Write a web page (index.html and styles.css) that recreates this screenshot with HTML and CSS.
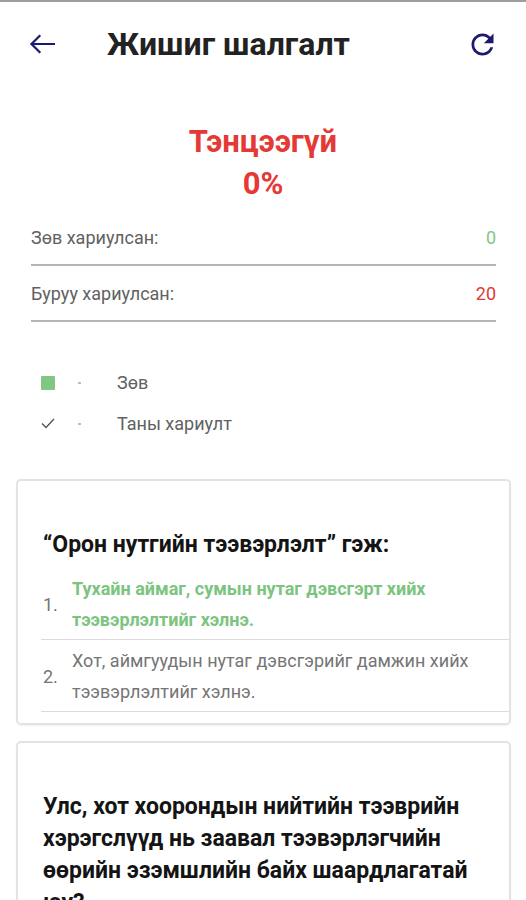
FILE: index.html
```html
<!DOCTYPE html>
<html lang="mn">
<head>
<meta charset="utf-8">
<title>Жишиг шалгалт</title>
<link rel="stylesheet" href="styles.css">
</head>
<body>
<div class="statusbar"></div>
<header class="appbar">
  <svg class="back" width="26" height="20" viewBox="0 0 26 20" aria-hidden="true">
    <path d="M25 10H2.5M10.5 2L2.5 10l8 8" fill="none" stroke="currentColor" stroke-width="2.2" stroke-linecap="square"/>
  </svg>
  <h1 class="title">Жишиг шалгалт</h1>
  <svg class="refresh" width="33" height="33" viewBox="0 0 24 24" aria-hidden="true">
    <path fill="currentColor" d="M17.65 6.35C16.2 4.9 14.21 4 12 4c-4.42 0-7.99 3.58-7.99 8s3.57 8 7.99 8c3.73 0 6.84-2.55 7.73-6h-2.08c-.82 2.33-3.04 4-5.65 4-3.31 0-6-2.69-6-6s2.69-6 6-6c1.66 0 3.14.69 4.22 1.78L13 11h7V4l-2.35 2.35z"/>
  </svg>
</header>

<section class="result">
  <div class="verdict">Тэнцээгүй</div>
  <div class="percent">0%</div>
</section>

<section class="stats">
  <div class="stat">
    <span class="stat-label">Зөв хариулсан:</span>
    <span class="stat-value good">0</span>
  </div>
  <div class="stat">
    <span class="stat-label">Буруу хариулсан:</span>
    <span class="stat-value bad">20</span>
  </div>
</section>

<section class="legend">
  <div class="legend-row">
    <span class="legend-icon"><span class="swatch"></span></span>
    <span class="legend-dot"></span>
    <span class="legend-text">Зөв</span>
  </div>
  <div class="legend-row">
    <span class="legend-icon">
      <svg width="14" height="11" viewBox="0 0 14 11" aria-hidden="true"><path d="M1 5.5l4 4L13 1" fill="none" stroke="#555" stroke-width="1.4"/></svg>
    </span>
    <span class="legend-dot"></span>
    <span class="legend-text">Таны хариулт</span>
  </div>
</section>

<section class="cards">
  <article class="card">
    <h2 class="question">“Орон нутгийн тээвэрлэлт” гэж:</h2>
    <ol class="options">
      <li class="option correct">
        <span class="num">1.</span>
        <span class="opt-text">Тухайн аймаг, сумын нутаг дэвсгэрт хийх тээвэрлэлтийг хэлнэ.</span>
      </li>
      <li class="option">
        <span class="num">2.</span>
        <span class="opt-text">Хот, аймгуудын нутаг дэвсгэрийг дамжин хийх тээвэрлэлтийг хэлнэ.</span>
      </li>
    </ol>
  </article>
  <article class="card">
    <h2 class="question">Улс, хот хоорондын нийтийн тээврийн хэрэгслүүд нь заавал тээвэрлэгчийн өөрийн эзэмшлийн байх шаардлагатай юу?</h2>
  </article>
</section>
</body>
</html>
```

FILE: styles.css
```css
* { box-sizing: border-box; }

html, body {
  margin: 0;
  padding: 0;
  background: #fff;
}

body {
  font-family: Roboto, "Noto Sans", "Liberation Sans", sans-serif;
  color: #212121;
}

.statusbar {
  height: 2px;
  background: #9e9e9e;
}

.appbar {
  height: 84px;
  display: flex;
  align-items: center;
  padding: 0 27px 0 29px;
  color: #1c1a6e;
}

.back { flex: none; }

.title {
  flex: 1;
  margin: 0 0 0 52px;
  font-size: 32px;
  font-weight: 700;
  color: #222;
  line-height: 40px;
}

.refresh { flex: none; }

.result {
  margin-top: 35px;
  text-align: center;
  color: #e53935;
  font-weight: 700;
  font-size: 31px;
  line-height: 42px;
}

.stats {
  margin-top: 5px;
  padding: 0 30px 0 31px;
}

.stat {
  display: flex;
  justify-content: space-between;
  align-items: center;
  padding: 16px 0 14px;
  line-height: 24px;
  font-size: 18px;
  border-bottom: 2px solid #b4b4b4;
}

.stat-label { color: #616161; }
.good { color: #81c784; }
.bad { color: #e53935; }

.legend {
  margin-top: 40px;
  padding-left: 41px;
}

.legend-row {
  display: flex;
  align-items: center;
  height: 41px;
  font-size: 18px;
  color: #616161;
}

.legend-icon {
  width: 14px;
  display: flex;
  align-items: center;
  justify-content: center;
}

.swatch {
  width: 14px;
  height: 14px;
  background: #81c784;
  border-radius: 1px;
}

.legend-dot {
  width: 3px;
  height: 2px;
  background: #bdbdbd;
  margin-left: 23px;
}

.legend-text { margin-left: 36px; }

.cards {
  margin-top: 35px;
  padding: 0 15px 0 16px;
  display: flex;
  flex-direction: column;
  gap: 16px;
}

.card {
  border: 2px solid #e3e3e3;
  border-radius: 5px;
  box-shadow: 0 1px 2px rgba(0,0,0,0.06);
  padding: 48px 0 11px;
}

.question {
  margin: 0;
  padding: 0 25px;
  font-size: 23px;
  font-weight: 700;
  line-height: 32px;
  color: #141414;
}

.options {
  list-style: none;
  margin: 7px 0 0 23px;
  padding: 0;
}

.option {
  display: flex;
  align-items: center;
  padding: 5px 0 4px 2px;
  border-bottom: 1px solid #dcdcdc;
  font-size: 18px;
  line-height: 31px;
  color: #757575;
}

.num {
  flex: none;
  width: 29px;
}

.opt-text { padding-right: 20px; }

.option.correct .opt-text {
  color: #7cc47f;
  font-weight: 700;
}
```
